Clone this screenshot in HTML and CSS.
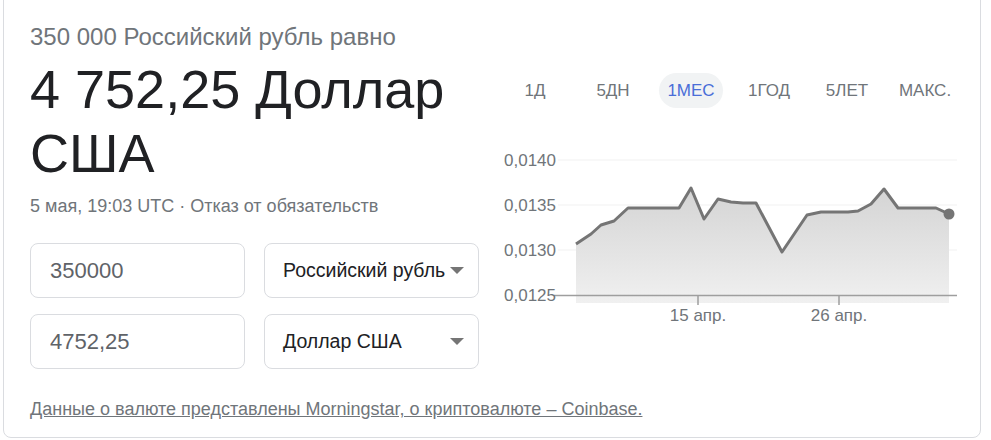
FILE: index.html
```html
<!DOCTYPE html>
<html lang="ru">
<head>
    <meta charset="UTF-8">
    <meta name="viewport" content="width=device-width, initial-scale=1.0">
    <title>Конвертер валют</title>
    <link rel="stylesheet" href="styles.css">
</head>
<body>
    <div class="card">
        <div class="top-row">
            <div class="left-col">
                <div class="subtitle">350 000 Российский рубль равно</div>
                <div class="result">4 752,25 Доллар США</div>
                <div class="date">5 мая, 19:03 UTC · Отказ от обязательств</div>

                <div class="converter">
                    <input class="amount" type="text" value="350000">
                    <div class="select">
                        <span>Российский рубль</span>
                        <span class="arrow"></span>
                    </div>
                    <input class="amount" type="text" value="4752,25">
                    <div class="select">
                        <span>Доллар США</span>
                        <span class="arrow"></span>
                    </div>
                </div>
            </div>

            <div class="right-col">
                <div class="tabs">
                    <div class="tab"><span>1Д</span></div>
                    <div class="tab"><span>5ДН</span></div>
                    <div class="tab active"><span>1МЕС</span></div>
                    <div class="tab"><span>1ГОД</span></div>
                    <div class="tab"><span>5ЛЕТ</span></div>
                    <div class="tab"><span>МАКС.</span></div>
                </div>

                <svg class="chart" width="468" height="190" viewBox="495 140 468 190">
                    <defs>
                        <linearGradient id="areaFill" x1="0" y1="0" x2="0" y2="1">
                            <stop offset="0" stop-color="#d4d4d4"/>
                            <stop offset="1" stop-color="#f0f0f0"/>
                        </linearGradient>
                    </defs>

                    <!-- grid -->
                    <line x1="557" y1="159" x2="956" y2="159" stroke="#f1f1f1" stroke-width="1"/>
                    <line x1="557" y1="204" x2="956" y2="204" stroke="#f1f1f1" stroke-width="1"/>
                    <line x1="557" y1="249" x2="956" y2="249" stroke="#f1f1f1" stroke-width="1"/>

                    <!-- area + line -->
                    <polygon fill="url(#areaFill)" points="575,243 590,233 600,224 613,220 627,207 678,207 690,187 703,218 717,198 730,201 742,202 755,202 781,251 806,214 820,211 847,211 857,210 870,203 883,188 897,207 935,207 948,213 948,302 575,302"/>
                    <polyline fill="none" stroke="#757575" stroke-width="3" stroke-linejoin="round" points="575,243 590,233 600,224 613,220 627,207 678,207 690,187 703,218 717,198 730,201 742,202 755,202 781,251 806,214 820,211 847,211 857,210 870,203 883,188 897,207 935,207 948,213"/>
                    <circle cx="948" cy="213" r="5.5" fill="#757575"/>

                    <!-- axis -->
                    <line x1="553" y1="294.5" x2="956" y2="294.5" stroke="#9e9e9e" stroke-width="1.5"/>
                    <line x1="697" y1="294" x2="697" y2="304" stroke="#9e9e9e" stroke-width="1.5"/>
                    <line x1="838" y1="294" x2="838" y2="304" stroke="#9e9e9e" stroke-width="1.5"/>

                    <g class="axis-label" text-anchor="end">
                        <text x="555" y="165">0,0140</text>
                        <text x="555" y="210">0,0135</text>
                        <text x="555" y="255">0,0130</text>
                        <text x="555" y="300">0,0125</text>
                    </g>
                    <g class="axis-label" text-anchor="middle">
                        <text x="697" y="320">15 апр.</text>
                        <text x="838" y="320">26 апр.</text>
                    </g>
                </svg>
            </div>
        </div>

        <a class="source" href="#">Данные о валюте представлены Morningstar, о криптовалюте – Coinbase.</a>
    </div>
</body>
</html>
```

FILE: styles.css
```css
body {
    margin: 0;
    padding: 0;
    background: #fff;
    font-family: "Liberation Sans", Arial, sans-serif;
    color: #202124;
    overflow: hidden;
}
.card {
    box-sizing: border-box;
    width: 978px;
    height: 458px;
    margin: -20px 0 0 3px;
    padding: 42px 0 0 26px;
    border: 1px solid #dadce0;
    border-radius: 8px;
}
.top-row {
    display: flex;
}
.left-col {
    width: 466px;
}
.subtitle {
    font-size: 24px;
    line-height: 28px;
    color: #70757a;
}
.result {
    margin-top: 6px;
    width: 440px;
    font-size: 54px;
    line-height: 64px;
    color: #202124;
}
.date {
    margin-top: 9px;
    font-size: 18px;
    line-height: 24px;
    color: #70757a;
}
.converter {
    margin-top: 25px;
    display: grid;
    grid-template-columns: 215px 215px;
    column-gap: 19px;
    row-gap: 16px;
}
.amount {
    box-sizing: border-box;
    width: 215px;
    height: 55px;
    margin: 0;
    padding: 0 19px;
    border: 1px solid #dadce0;
    border-radius: 8px;
    font-family: inherit;
    font-size: 22px;
    color: #5f6368;
    outline: none;
}
.select {
    box-sizing: border-box;
    height: 55px;
    padding: 0 14px 0 18px;
    border: 1px solid #dadce0;
    border-radius: 8px;
    display: flex;
    align-items: center;
    justify-content: space-between;
    font-size: 19.5px;
    white-space: nowrap;
    color: #202124;
}
.arrow {
    flex-shrink: 0;
    margin-left: 4px;
    width: 0;
    height: 0;
    border-left: 7px solid transparent;
    border-right: 7px solid transparent;
    border-top: 7px solid #757575;
}
.right-col {
    width: 468px;
}
.tabs {
    margin-top: 50px;
    display: flex;
}
.tab {
    width: 78px;
    height: 35px;
    display: flex;
    align-items: center;
    justify-content: center;
    font-size: 17px;
    color: #70757a;
}
.tab span {
    padding: 0 8px;
    line-height: 35px;
    border-radius: 18px;
}
.tab.active span {
    background: #f1f3f4;
    color: #4a6ed8;
}
.chart {
    display: block;
    margin-top: 33px;
}
.axis-label {
    font-family: "Liberation Sans", Arial, sans-serif;
    font-size: 17px;
    fill: #70757a;
}
.source {
    display: inline-block;
    margin-top: 28px;
    font-size: 18px;
    line-height: 24px;
    color: #70757a;
}
```
